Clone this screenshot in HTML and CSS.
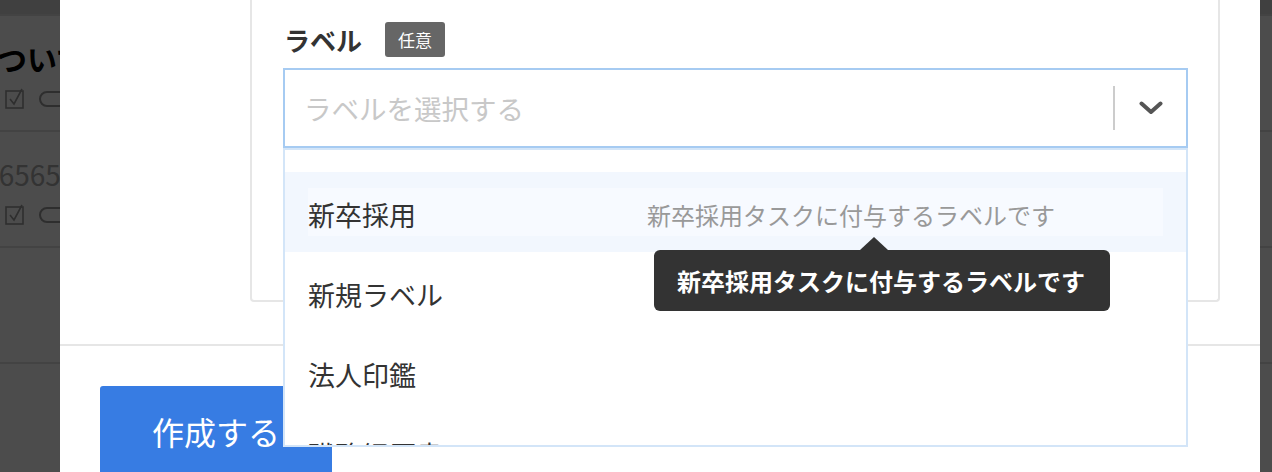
FILE: index.html
```html
<!DOCTYPE html>
<html lang="ja">
<head>
<meta charset="utf-8">
<title>ラベル</title>
<link rel="stylesheet" href="styles.css">
</head>
<body>
  <div class="page">
    <div class="page-head"></div>
    <div class="task-row">
      <div class="task-title">ついて</div>
      <div class="task-meta">
        <svg class="check" width="20" height="22" viewBox="0 0 20 22"><rect x="1" y="3" width="17" height="17" fill="none" stroke="#999" stroke-width="1.6"/><polyline points="5,11 9,16 17,1" fill="none" stroke="#999" stroke-width="1.6"/></svg>
        <span class="pill"></span>
      </div>
    </div>
    <div class="task-row">
      <div class="task-title muted">-6565</div>
      <div class="task-meta">
        <svg class="check" width="20" height="22" viewBox="0 0 20 22"><rect x="1" y="3" width="17" height="17" fill="none" stroke="#999" stroke-width="1.6"/><polyline points="5,11 9,16 17,1" fill="none" stroke="#999" stroke-width="1.6"/></svg>
        <span class="pill"></span>
      </div>
    </div>
    <div class="task-row"></div>
  </div>

  <div class="overlay">
    <div class="modal">
      <div class="modal-body">
        <div class="card">
          <div class="field-label">
            <span>ラベル</span>
            <span class="badge">任意</span>
          </div>
          <div class="select-wrap">
            <div class="select">
              <span class="placeholder">ラベルを選択する</span>
              <span class="divider"></span>
              <span class="arrow">
                <svg width="24" height="14" viewBox="0 0 24 14"><polyline points="2.5,2.5 12,11 21.5,2.5" fill="none" stroke="#555" stroke-width="4" stroke-linecap="round" stroke-linejoin="round"/></svg>
              </span>
            </div>
            <div class="menu">
              <div class="option hover">
                <div class="option-inner">
                  <span class="option-name">新卒採用</span>
                  <span class="option-desc">新卒採用タスクに付与するラベルです</span>
                </div>
              </div>
              <div class="option">
                <div class="option-inner"><span class="option-name">新規ラベル</span></div>
              </div>
              <div class="option">
                <div class="option-inner"><span class="option-name">法人印鑑</span></div>
              </div>
              <div class="option">
                <div class="option-inner"><span class="option-name">職務経歴書</span></div>
              </div>
              <div class="tooltip">新卒採用タスクに付与するラベルです</div>
            </div>
          </div>
        </div>
      </div>
      <div class="modal-foot">
        <button class="btn-primary">作成する</button>
      </div>
    </div>
  </div>
</body>
</html>
```

FILE: styles.css
```css
html, body { margin: 0; height: 100%; overflow: hidden; }
body { font-family: "Noto Sans CJK JP", "Noto Sans", sans-serif; color: #333; background: #fff; }

/* page behind the modal */
.page { width: 100%; }
.page-head { height: 14px; background: #d8d8d8; border-bottom: 2px solid #e0e0e0; }
.task-row { height: 116px; border-bottom: 2px solid #e0e0e0; padding-top: 20px; box-sizing: border-box; margin-left: -3px; }
.task-title { font-size: 30px; font-weight: bold; line-height: 44px; color: #000; white-space: nowrap; }
.task-title.muted { font-weight: normal; color: #aaa; font-size: 28px; margin-left: -8px; }
.task-meta { display: flex; align-items: center; gap: 14px; margin-top: 8px; margin-left: 8px; height: 22px; }
.pill { width: 40px; height: 12px; border: 2px solid #999; border-radius: 8px; }

/* modal */
.overlay { position: fixed; inset: 0; background: rgba(0, 0, 0, 0.7); display: flex; padding: 0 12px 0 60px; }
.modal { flex: 1; background: #fff; display: flex; flex-direction: column; }
.modal-body { padding: 0 40px 0 190px; }
.card { border: 2px solid #e6e6e6; border-top: none; border-radius: 0 0 4px 4px; padding: 22px 30px 152px 31px; }

.field-label { display: flex; align-items: center; gap: 23px; height: 35px; margin-bottom: 11px; font-size: 26px; font-weight: bold; color: #333; padding-left: 1px; }
.badge { background: #666; color: #fff; font-size: 17px; font-weight: normal; height: 35px; line-height: 35px; padding: 0 13px; border-radius: 3px; }

.select-wrap { position: relative; }
.select { height: 80px; box-sizing: border-box; border: 2px solid #a6cbf2; display: flex; align-items: center; padding-left: 19px; }
.placeholder { flex: 1; font-size: 27.5px; color: #c8c8c8; }
.divider { width: 2px; height: 44px; background: #ccc; }
.arrow { width: 71px; display: flex; justify-content: center; align-items: center; }
.arrow svg { display: block; }

.menu { position: absolute; top: 100%; left: 0; right: 0; height: 299px; box-sizing: border-box; border: 2px solid #d3e5f8; background: #fff; padding-top: 22px; overflow: hidden; }
.option { height: 80px; padding: 16px 23px; box-sizing: border-box; }
.option.hover { background: #f2f7fe; }
.option-inner { height: 48px; display: flex; align-items: center; }
.option.hover .option-inner { background: #f7faff; }
.option-name { width: 339px; font-size: 27px; color: #333; padding-top: 4px; }
.option-desc { font-size: 24px; color: #999; padding-top: 4px; }

.tooltip { position: absolute; left: 369px; top: 100px; width: 456px; height: 61px; box-sizing: border-box; background: #333; color: #fff; border-radius: 6px; font-size: 24px; font-weight: bold; line-height: 61px; padding-left: 23px; white-space: nowrap; }
.tooltip::before { content: ""; position: absolute; left: 206px; top: -13px; border-left: 14px solid transparent; border-right: 14px solid transparent; border-bottom: 13px solid #333; }

.modal-foot { margin-top: 42px; border-top: 2px solid #e6e6e6; padding: 40px; }
.btn-primary { width: 232px; height: 90px; border: none; border-radius: 3px; background: #377ce3; color: #fff; font-family: inherit; font-size: 32px; padding: 0; }
```
